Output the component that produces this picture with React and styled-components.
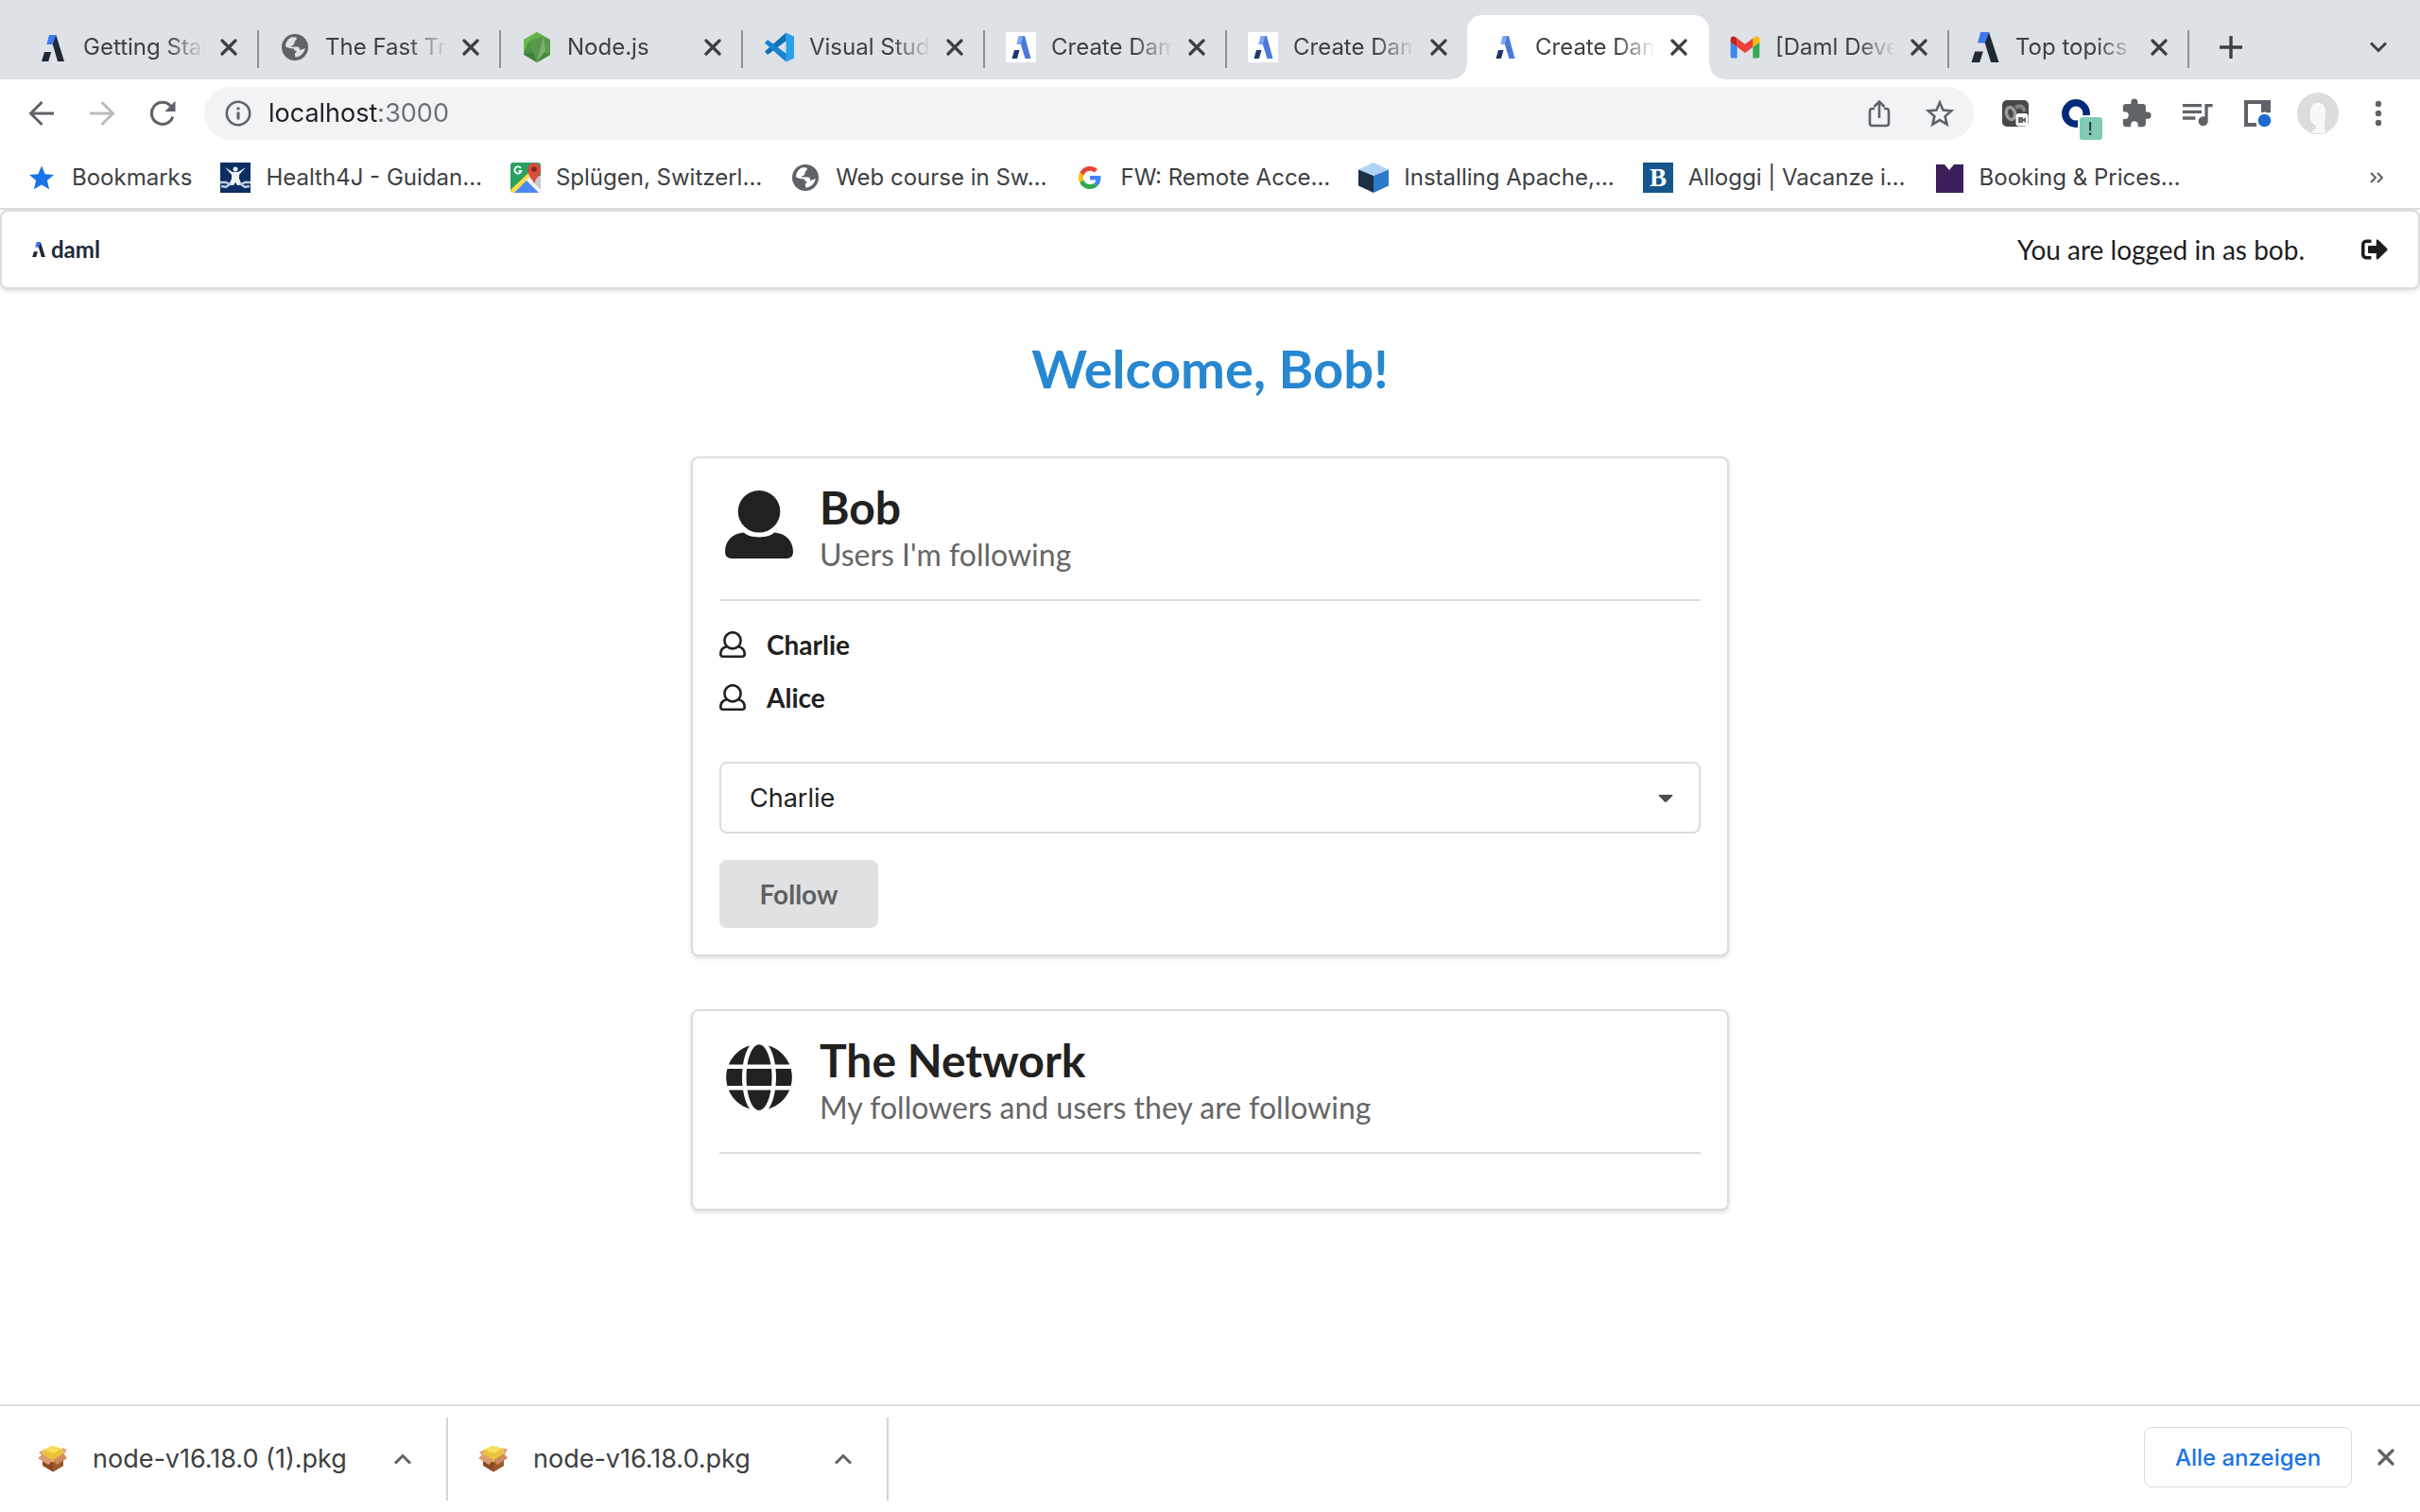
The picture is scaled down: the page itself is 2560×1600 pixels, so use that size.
import React, { useState } from 'react';
import styled, { createGlobalStyle, css } from 'styled-components';
import { FaGlobe, FaSignOutAlt } from 'react-icons/fa';
import { MdExtension, MdQueueMusic } from 'react-icons/md';

const uiFont = "Inter, Roboto, 'Liberation Sans', sans-serif";
const pageFont = "Lato, 'Liberation Sans', sans-serif";
const hairline = '#dcdcdd';

const GlobalStyle = createGlobalStyle`
  *, *::before, *::after { box-sizing: border-box; }
  body { margin: 0; background: #fff; font-family: ${uiFont}; color: #3c4043; }
  h1, h2, p, ul { margin: 0; padding: 0; }
  ul { list-style: none; }
  button, input, select { font-family: inherit; }
  svg { display: block; flex: none; }
`;

/* ---------- shell ---------- */

const Window = styled.div`
  display: flex;
  flex-direction: column;
  min-height: 100vh;
`;

const IconButton = styled.button`
  display: flex;
  align-items: center;
  justify-content: center;
  flex: none;
  width: ${(p) => p.$width || 40}px;
  height: 48px;
  padding: 0;
  border: 0;
  background: none;
  color: ${(p) => p.$color || '#5f6368'};
`;

/* The badge hangs past the lower right corner of the icon. */
const BadgedButton = styled(IconButton)`
  justify-content: flex-start;
  height: 56px;
`;

/* ---------- tab strip ---------- */

const TabStrip = styled.nav`
  display: flex;
  align-items: center;
  padding: 16px 24px 0 18px;
  background: #dee1e6;
`;

const Tab = styled.div`
  position: relative;
  display: flex;
  align-items: center;
  flex: 0 1 ${(p) => p.$width}px;
  min-width: 0;
  height: 68px;
  padding: 0 21px 0 22px;
  ${(p) =>
    p.$divided &&
    css`
      &::after {
        content: '';
        flex: none;
        width: 2px;
        height: 40px;
        margin: 4px -21px 0 21px;
        background: #8d9196;
      }
    `}
  ${(p) =>
    p.$active &&
    css`
      padding: 0 23px 0 24px;
      border-radius: 16px 16px 0 0;
      background: #fff;
      &::before,
      &::after {
        content: '';
        position: absolute;
        bottom: 0;
        width: 16px;
        height: 16px;
      }
      &::before {
        right: 100%;
        background: radial-gradient(circle at 0 0, transparent 15px, #fff 16px);
      }
      &::after {
        left: 100%;
        background: radial-gradient(circle at 100% 0, transparent 15px, #fff 16px);
      }
    `}
`;

const TabTitle = styled.a`
  flex: 1;
  min-width: 0;
  margin: 0 16px;
  overflow: hidden;
  font-size: 24px;
  line-height: 32px;
  white-space: nowrap;
  color: #3c4043;
  text-decoration: none;
  mask-image: linear-gradient(to right, #000 68%, transparent);
`;

const CloseTab = styled(IconButton)`
  width: 18px;
`;

const TabMenu = styled(IconButton)`
  margin-left: auto;
`;

const NewTab = styled(IconButton)`
  margin-left: 24px;
`;

/* ---------- toolbar ---------- */

const Toolbar = styled.div`
  display: flex;
  align-items: center;
  gap: 24px;
  padding: 8px 24px;
`;

const AddressBar = styled.form`
  display: flex;
  align-items: center;
  flex: 1;
  height: 56px;
  padding: 0 16px 0 20px;
  border-radius: 28px;
  background: #f1f3f4;
`;

/* The host is darker than the port that follows it. */
const AddressInput = styled.input`
  flex: 1;
  min-width: 0;
  margin-left: 16px;
  padding: 0;
  border: 0;
  outline: 0;
  font-size: 27px;
  line-height: 40px;
  color: transparent;
  background: linear-gradient(to right, #202124 118px, #6b6e72 118px);
  background-clip: text;
`;

const AddressActions = styled.div`
  display: flex;
  gap: 24px;
`;

/* ---------- bookmarks ---------- */

const BookmarkBar = styled.nav`
  display: flex;
  align-items: center;
  gap: 30px;
  height: 66px;
  padding: 0 26px 0 28px;
  border-bottom: 2px solid ${hairline};
`;

const Bookmark = styled.a`
  display: flex;
  align-items: center;
  gap: 16px;
  font-size: 24px;
  line-height: 32px;
  white-space: nowrap;
  color: #3c4043;
  text-decoration: none;
`;

const MoreBookmarks = styled(IconButton)`
  margin-left: auto;
`;

/* ---------- page ---------- */

const Page = styled.div`
  flex: 1;
  padding-bottom: 56px;
  font-family: ${pageFont};
  color: #212121;
`;

const raised = css`
  border: 2px solid ${hairline};
  border-radius: 8px;
  background: #fff;
  box-shadow: 0 2px 4px rgba(34, 36, 38, 0.15);
`;

const MenuBar = styled.header`
  ${raised}
  display: flex;
  align-items: center;
  height: 84px;
  padding: 0 32px;
`;

const Brand = styled.a`
  display: flex;
  align-items: center;
  gap: 6px;
  font-size: 24px;
  line-height: 24px;
  font-weight: 700;
  color: #1c2a3a;
  text-decoration: none;
`;

const LoginStatus = styled.p`
  margin-left: auto;
  margin-right: 60px;
  font-size: 28px;
  line-height: 36px;
  color: #1d1d1d;
`;

const Welcome = styled.h1`
  margin: 48px 0 57px;
  font-size: 56px;
  line-height: 72px;
  font-weight: 700;
  text-align: center;
  color: #2787d0;
`;

const Cards = styled.main`
  display: flex;
  flex-direction: column;
  gap: 56px;
  width: 100%;
  max-width: 1098px;
  margin: 0 auto;
`;

const Card = styled.section`
  ${raised}
  padding: 28px;
`;

const CardHeader = styled.div`
  display: flex;
  gap: 22px;
  padding-bottom: 27px;
  border-bottom: 2px solid ${hairline};
`;

const CardIcon = styled.div`
  display: flex;
  justify-content: center;
  width: 84px;
  padding-top: 6px;
`;

const CardTitle = styled.h2`
  font-size: 48px;
  line-height: 48px;
  font-weight: 700;
`;

const CardSubtitle = styled.p`
  margin-top: 6px;
  font-size: 32px;
  line-height: 40px;
  color: #666;
`;

const CardBody = styled.div`
  min-height: 30px;
`;

const People = styled.ul`
  padding-top: 18px;
`;

const Person = styled.li`
  display: flex;
  align-items: center;
  gap: 22px;
  height: 56px;
  font-size: 28px;
  font-weight: 700;
`;

const FollowForm = styled.form`
  display: flex;
  flex-direction: column;
  align-items: flex-start;
  gap: 28px;
  padding-top: 40px;
`;

const SelectField = styled.label`
  position: relative;
  display: block;
  width: 100%;
`;

const Select = styled.select`
  display: block;
  width: 100%;
  height: 76px;
  padding: 0 30px;
  border: 2px solid ${hairline};
  border-radius: 8px;
  appearance: none;
  outline: 0;
  background: #fff;
  font-family: ${uiFont};
  font-size: 27px;
  color: #212121;
`;

const Caret = styled.svg`
  position: absolute;
  top: 35px;
  right: 29px;
  pointer-events: none;
`;

const FollowButton = styled.button`
  width: 168px;
  height: 72px;
  padding: 0;
  border: 0;
  border-radius: 8px;
  background: #e0e1e2;
  font-size: 28px;
  font-weight: 700;
  color: #5f6061;
`;

/* ---------- download shelf ---------- */

const Shelf = styled.footer`
  display: flex;
  padding: 12px 22px 12px 8px;
  border-top: 2px solid ${hairline};
`;

const Download = styled.div`
  display: flex;
  align-items: center;
  width: 466px;
  height: 88px;
  padding: 0 26px 0 32px;
  border-right: 2px solid #d2d3d5;
`;

const DownloadLink = styled.a`
  flex: 1;
  margin-left: 26px;
  font-size: 27px;
  line-height: 36px;
  white-space: nowrap;
  color: #3c4043;
  text-decoration: none;
`;

const ShelfActions = styled.div`
  display: flex;
  align-items: center;
  gap: 22px;
  height: 64px;
  margin: 10px 0 0 auto;
`;

const ShowAll = styled.button`
  width: 220px;
  height: 64px;
  padding: 0;
  border: 1px solid #dadce0;
  border-radius: 8px;
  background: #fff;
  font-size: 24px;
  font-weight: 500;
  color: #1a73e8;
`;

/* ---------- icons ---------- */

const Line = ({ w, h, d, sw = 3, color = 'currentColor', ...rest }) => (
  <svg width={w} height={h} viewBox={`0 0 ${w} ${h}`} fill="none" stroke={color} strokeWidth={sw} {...rest}>
    <path d={d} />
  </svg>
);

const Cross = ({ color = '#3c4043' }) => (
  <Line w={18} h={18} d="M2 2L16 16M16 2L2 16" sw={3.2} color={color} strokeLinecap="round" />
);

const Fav = ({ children }) => (
  <svg width="32" height="32" viewBox="0 0 32 32">
    {children}
  </svg>
);

const DamlMark = () => (
  <g>
    <path d="M8 0h7.3l-2.6 10H5.4z" fill="#3c78f5" />
    <path d="M15.3 0L24 28h-7L11.800 10z" fill="#1f2a37" />
    <path d="M3 18h7.200L7.200 28H0z" fill="#1f2a37" />
  </g>
);

const DamlFav = () => (
  <Fav>
    <g transform="translate(4 3)">
      <DamlMark />
    </g>
  </Fav>
);

const DamlBigFav = () => (
  <Fav>
    <g transform="translate(1.500 0) scale(1.21 1.140)">
      <DamlMark />
    </g>
  </Fav>
);

const DamlAppFav = () => (
  <Fav>
    <rect width="32" height="32" fill="#fff" />
    <path d="M13.500 4h6l-2.200 9h-6z" fill="#7da7f7" />
    <path d="M18.500 4l1.500 0 6.500 24h-6L15.800 13z" fill="#4a78dc" />
    <path d="M9 19h5.500l-2.500 9H6.500z" fill="#20366f" />
  </Fav>
);

const WorldFav = ({ land = '#fff' }) => (
  <Fav>
    <circle cx="16" cy="16" r="14" fill="#5f6368" />
    <path
      d="M12.500 5.200l5 .3c.8 2-.3 3.200-1.600 3.700-.6 2-.2 3.800-1.800 4.600-1 .5-2 .2-2.200 1.800h7c1.800.2 2.200 1.500 2 3 1 .6 3.600-.3 5.800-1.800-.6 5.400-5.200 9.800-10.300 9.600l-.6-3.200c.4-1.500 2-1.400 1.800-3-1.800-.4-2.800-1.400-3-3-2.800 0-6.300-.2-8.500-2C6 10.800 8.500 7 12.500 5.200z"
      fill={land}
    />
  </Fav>
);

const WorldTabFav = () => <WorldFav land="#dee1e6" />;

const NodeFav = () => (
  <Fav>
    <path d="M16 0l14 8v16l-14 8-14-8V8z" fill="#589a4b" />
    <path d="M16 0L2 8v14L7 10z" fill="#6cbd45" />
    <path d="M7 10l16-6-7-4z" fill="#62b246" />
    <path d="M7 10L2 23l14 9z" fill="#4f9145" />
    <path d="M2 23l10-1 4 10z" fill="#3d7f3a" />
    <path d="M23 4L16 32l9-13z" fill="#7ab06d" />
    <path d="M30 24l-7-2-7 10z" fill="#3f873f" />
  </Fav>
);

const CodeFav = () => (
  <Fav>
    <path d="M23.500.500L1 20.500l3 3.500L24 9z" fill="#0f70b8" />
    <path d="M23.500 31.500L1 11.500 4 8l20 15z" fill="#1684cf" />
    <path d="M23.500.500L32 4.500v23l-8.500 4V.500z" fill="#29a0ec" />
  </Fav>
);

const MailFav = () => (
  <svg width="32" height="24" viewBox="50 42 92 66">
    <path fill="#4285f4" d="M58 108h14V74L52 59v43c0 3.320 2.690 6 6 6" />
    <path fill="#34a853" d="M120 108h14c3.320 0 6-2.690 6-6V59l-20 15" />
    <path fill="#fbbc04" d="M120 48v26l20-15v-8c0-7.420-8.470-11.650-14.400-7.200" />
    <path fill="#ea4335" d="M72 74V48l24 18 24-18v26L96 92" />
    <path fill="#c5221f" d="M52 51v8l20 15V48l-5.600-4.200c-5.940-4.450-14.400-.22-14.400 7.200" />
  </svg>
);

const StarFav = () => (
  <Fav>
    <path d="M16 3.500l3.700 8.700 9.300.8-7.100 6.100 2.200 9.200L16 23.400l-8.100 4.900 2.200-9.200L3 13l9.300-.8z" fill="#1a73e8" />
  </Fav>
);

const HealthFav = () => (
  <Fav>
    <rect width="32" height="32" fill="#0b2e63" />
    <circle cx="16" cy="7" r="2.500" fill="#e6ecf3" />
    <path d="M5 5l8 5h6l8-5-7 8v4l3 7h-5l-2-3-2 3H9l3-7v-4z" fill="#eef2f7" />
    <path d="M0 21h6l4 2-4 3-5-1M32 21h-6l-4 2 4 3 5-1" fill="none" stroke="#c3cfde" strokeWidth="2.400" />
  </Fav>
);

const MapFav = () => (
  <Fav>
    <rect width="32" height="32" rx="3" fill="#2ba160" />
    <path d="M32 14v18h-3L17 18l8-4z" fill="#c9c9c9" />
    <path d="M16 18l15 14H2z" fill="#4a89f3" />
    <path d="M0 29L19 11l3 3L4 32H1z" fill="#fddc4e" />
    <path d="M16.500 18.500l3-3L32 29v3h-2z" fill="#f3f3f3" />
    <path d="M25 23c-.6-6-7-9-7-15.500a7 7 0 0 1 14 0C32 14 25.600 17 25 23z" fill="#dc4b3e" />
    <circle cx="25" cy="7" r="2.800" fill="#7c2b24" />
    <path d="M11 6A3.600 3.600 0 1 0 11.500 8.800H8.500" fill="none" stroke="#fff" strokeWidth="1.800" />
  </Fav>
);

const GoogleFav = () => (
  <svg width="32" height="24" viewBox="-8 0 64 48">
    <path fill="#ea4335" d="M24 9.500c3.540 0 6.710 1.220 9.210 3.600l6.850-6.850C35.900 2.380 30.470 0 24 0 14.620 0 6.510 5.380 2.560 13.220l7.980 6.190C12.430 13.720 17.740 9.500 24 9.500z" />
    <path fill="#4285f4" d="M46.980 24.550c0-1.570-.15-3.090-.38-4.550H24v9.020h12.940c-.58 2.960-2.260 5.480-4.780 7.180l7.730 6c4.510-4.180 7.090-10.360 7.090-17.650z" />
    <path fill="#fbbc05" d="M10.530 28.590c-.48-1.450-.76-2.990-.76-4.590s.27-3.140.76-4.590l-7.980-6.190C.92 16.460 0 20.120 0 24c0 3.880.92 7.540 2.560 10.780l7.970-6.190z" />
    <path fill="#34a853" d="M24 48c6.480 0 11.930-2.130 15.890-5.810l-7.730-6c-2.150 1.450-4.920 2.300-8.160 2.300-6.260 0-11.570-4.220-13.470-9.910l-7.980 6.190C6.510 42.620 14.620 48 24 48z" />
  </svg>
);

const CubeFav = () => (
  <Fav>
    <path d="M16 0l16 7.500L16 14 0 7.500z" fill="#aed3f5" />
    <path d="M0 7.500L16 14v18L0 24.500z" fill="#1b2f45" />
    <path d="M32 7.500L16 14v18l16-7.500z" fill="#2e79c9" />
  </Fav>
);

const LodgingFav = () => (
  <Fav>
    <rect width="32" height="32" fill="#15578c" />
    <text x="16" y="25" textAnchor="middle" fontFamily="Liberation Serif, serif" fontWeight="700" fontSize="27" fill="#fff">
      B
    </text>
  </Fav>
);

const BookingFav = () => (
  <Fav>
    <path d="M2 2h9l5 6 5-6h10v30H2z" fill="#3b1f5b" />
  </Fav>
);

const CameraExtension = () => (
  <svg width="28" height="28" viewBox="0 0 28 28">
    <rect width="28" height="28" rx="5" fill="#484848" />
    <ellipse cx="9" cy="14" rx="4.500" ry="6.500" fill="none" stroke="#9b9b9b" strokeWidth="3.500" transform="rotate(-15 9 14)" />
    <path d="M14 8c3-2 6-2 8 0l2 4" fill="none" stroke="#808080" strokeWidth="4" />
    <rect x="14.500" y="14" width="13" height="13.500" rx="3" fill="#fff" />
    <path d="M17 18h5v2l3-2v6l-3-2v2h-5z" fill="#666" />
  </svg>
);

const AlertExtension = () => (
  <svg width="48" height="56" viewBox="0 0 48 56">
    <circle cx="20" cy="28" r="11.200" fill="none" stroke="#03297a" strokeWidth="7.500" />
    <rect x="22" y="30" width="26" height="26" rx="4" fill="#fff" />
    <rect x="24" y="32" width="24" height="24" rx="3" fill="#7fcbb5" />
    <text x="35" y="51" textAnchor="middle" fontFamily={uiFont} fontSize="18" fill="#202124">
      !
    </text>
  </svg>
);

const ReaderIcon = () => (
  <svg width="30" height="30" viewBox="0 0 30 30">
    <path d="M1 1h28v28H1zM5 5v20h14V5z" fill="#5f6368" fillRule="evenodd" />
    <circle cx="22.500" cy="22.500" r="9" fill="#fff" />
    <path d="M14 25h5v5h-5zM27 14h3v3h-3z" fill="#fff" />
    <circle cx="22.500" cy="22.500" r="6.800" fill="#1f69d2" />
  </svg>
);

const Avatar = () => (
  <svg width="44" height="44" viewBox="0 0 44 44">
    <circle cx="22" cy="22" r="22" fill="#dcdcdc" />
    <path d="M13 42c4-2 7-4 6-7-5-2-6-7-6-12 0-9 4-13 9-13 6 0 9 5 9 12 0 8-3 13 0 20-5 2.500-12 2.500-18 0z" fill="#f6f8fa" stroke="#c5d0d8" strokeWidth="0.8" />
  </svg>
);

const PersonSolid = () => (
  <svg width="72" height="72" viewBox="0 0 72 72" fill="#212121">
    <circle cx="36" cy="22.300" r="22.300" />
    <path d="M20 44.500C26 51 46 51 52 44.500 65 45.500 72 54 72 65q0 7-7 7H7q-7 0-7-7c0-11 7-19.500 20-20.500z" />
  </svg>
);

const PersonOutline = () => (
  <svg width="28" height="28" viewBox="0 0 28 28" fill="none" stroke="#212121" strokeWidth="2.600">
    <circle cx="14" cy="9.800" r="8.600" />
    <path d="M8 16.200C3.800 17 1.300 20 1.300 24.200q0 2.500 2.600 2.500h20.200q2.600 0 2.600-2.500C26.700 20 24.200 17 20 16.200" />
  </svg>
);

const PackageIcon = () => (
  <svg width="32" height="32" viewBox="0 0 32 32">
    <path d="M5 14l11 5 11-5v9l-11 6.500L5 23z" fill="#8a4b20" />
    <path d="M16 19l11-5v9l-11 6.500z" fill="#9c5a2a" />
    <path d="M6 6l9-4 11 3 1 8-11 6L5 14z" fill="#e9c437" />
    <path d="M6 6l9-4 11 3-9 5z" fill="#f9dc5c" />
    <path d="M5 11l11 6-5 5L0 15z" fill="#dc9c72" />
    <path d="M27 10l-11 7 4 5 11-7z" fill="#cf8b5f" />
    <path d="M26 4l5 2-4 6zM6 6L1 9l4 4z" fill="#e0a27a" />
  </svg>
);

const Chevron = ({ up }) => (
  <Line w={20} h={12} sw={3} color={up ? '#5f6368' : '#3c4043'} d={up ? 'M2 10.500L10 2.500L18 10.500' : 'M2 1.500L10 9.500L18 1.500'} />
);

/* ---------- data ---------- */

const tabs = [
  { title: 'Getting Started', Icon: DamlFav, width: 256, divided: true },
  { title: 'The Fast Track', Icon: WorldTabFav, width: 256, divided: true },
  { title: 'Node.js', Icon: NodeFav, width: 256, divided: true },
  { title: 'Visual Studio', Icon: CodeFav, width: 256, divided: true },
  { title: 'Create Daml', Icon: DamlAppFav, width: 256, divided: true },
  { title: 'Create Daml', Icon: DamlAppFav, width: 254 },
  { title: 'Create Daml', Icon: DamlAppFav, width: 256, active: true },
  { title: '[Daml Developers', Icon: MailFav, width: 254, divided: true },
  { title: 'Top topics', Icon: DamlBigFav, width: 254, divided: true },
];

const bookmarks = [
  ['Bookmarks', StarFav],
  ['Health4J - Guidan…', HealthFav],
  ['Splügen, Switzerl…', MapFav],
  ['Web course in Sw…', WorldFav],
  ['FW: Remote Acce…', GoogleFav],
  ['Installing Apache,…', CubeFav],
  ['Alloggi | Vacanze i…', LodgingFav],
  ['Booking & Prices…', BookingFav],
];

const following = ['Charlie', 'Alice'];
const downloads = ['node-v16.18.0 (1).pkg', 'node-v16.18.0.pkg'];

/* ---------- components ---------- */

function InfoCard({ icon, title, subtitle, children }) {
  return (
    <Card>
      <CardHeader>
        <CardIcon>{icon}</CardIcon>
        <div>
          <CardTitle>{title}</CardTitle>
          <CardSubtitle>{subtitle}</CardSubtitle>
        </div>
      </CardHeader>
      <CardBody>{children}</CardBody>
    </Card>
  );
}

export default function App() {
  const [address, setAddress] = useState('localhost:3000');
  const [selected, setSelected] = useState('Charlie');
  const stay = (e) => e.preventDefault();

  return (
    <Window>
      <GlobalStyle />
      <TabStrip aria-label="Tabs">
        {tabs.map(({ title, Icon, width, divided, active }, i) => (
          <Tab key={i} $width={width} $divided={divided} $active={active}>
            <Icon />
            <TabTitle href="#">{title}</TabTitle>
            <CloseTab aria-label="Close tab">
              <Cross />
            </CloseTab>
          </Tab>
        ))}
        <NewTab aria-label="New tab">
          <Line w={24} h={24} sw={3.4} color="#3c4043" d="M12 1V23M1 12H23" strokeLinecap="round" />
        </NewTab>
        <TabMenu aria-label="Search tabs">
          <Chevron />
        </TabMenu>
      </TabStrip>

      <Toolbar>
        <IconButton aria-label="Back">
          <Line w={28} h={28} d="M27 14H3M14.500 2L2.500 14L14.500 26" />
        </IconButton>
        <IconButton aria-label="Forward" $color="#babcbe">
          <Line w={28} h={28} d="M1 14H25M13.500 2L25.500 14L13.500 26" />
        </IconButton>
        <IconButton aria-label="Reload">
          <svg width="28" height="28" viewBox="0 0 28 28">
            <path d="M24.800 17.500A11.500 11.500 0 1 1 22.500 6.200" fill="none" stroke="currentColor" strokeWidth="3" />
            <path d="M27.500.800V12H16.300z" fill="currentColor" />
          </svg>
        </IconButton>
        <AddressBar onSubmit={stay}>
          <svg width="32" height="32" viewBox="0 0 32 32" fill="none" stroke="#5f6368" strokeWidth="2.600">
            <circle cx="16" cy="16" r="12.200" />
            <path d="M16 14.500V22.500M16 9.500V12.300" strokeWidth="3" />
          </svg>
          <AddressInput aria-label="Address" value={address} onChange={(e) => setAddress(e.target.value)} />
          <AddressActions>
            <IconButton type="button" aria-label="Share">
              <Line w={24} h={30} sw={2.6} d="M7 10H4.500Q2 10 2 12.500V25.500Q2 28 4.500 28H19.500Q22 28 22 25.500V12.500Q22 10 19.500 10H17M12 20V2.500M6.500 8L12 2.500L17.500 8" />
            </IconButton>
            <IconButton type="button" aria-label="Bookmark this page">
              <Line w={32} h={30} sw={2.6} d="M16 3.500L19.500 11.500L28.200 12.300L21.600 18.100L23.600 26.600L16 22.100L8.400 26.600L10.400 18.100L3.800 12.300L12.500 11.500Z" />
            </IconButton>
          </AddressActions>
        </AddressBar>
        <IconButton aria-label="Camera extension">
          <CameraExtension />
        </IconButton>
        <BadgedButton aria-label="Alert extension">
          <AlertExtension />
        </BadgedButton>
        <IconButton aria-label="Extensions">
          <MdExtension size={34} />
        </IconButton>
        <IconButton aria-label="Media">
          <MdQueueMusic size={40} />
        </IconButton>
        <IconButton aria-label="Side panel">
          <ReaderIcon />
        </IconButton>
        <IconButton aria-label="Profile">
          <Avatar />
        </IconButton>
        <IconButton aria-label="Browser menu">
          <svg width="8" height="28" viewBox="0 0 8 28" fill="currentColor">
            <circle cx="4" cy="4" r="3.200" />
            <circle cx="4" cy="14" r="3.200" />
            <circle cx="4" cy="24" r="3.200" />
          </svg>
        </IconButton>
      </Toolbar>

      <BookmarkBar aria-label="Bookmarks">
        {bookmarks.map(([label, Icon]) => (
          <Bookmark key={label} href="#">
            <Icon />
            {label}
          </Bookmark>
        ))}
        <MoreBookmarks aria-label="More bookmarks">
          <Line w={14} h={12} sw={2} d="M1 1L6 6L1 11M8 1L13 6L8 11" />
        </MoreBookmarks>
      </BookmarkBar>

      <Page>
        <MenuBar>
          <Brand href="#">
            <svg width="14" height="16" viewBox="0 0 24 28">
              <DamlMark />
            </svg>
            daml
          </Brand>
          <LoginStatus>You are logged in as bob.</LoginStatus>
          <IconButton aria-label="Log out" $width={28} $color="#1d1d1d">
            <FaSignOutAlt size={28} />
          </IconButton>
        </MenuBar>

        <Welcome>Welcome, Bob!</Welcome>

        <Cards>
          <InfoCard icon={<PersonSolid />} title="Bob" subtitle="Users I'm following">
            <People>
              {following.map((name) => (
                <Person key={name}>
                  <PersonOutline />
                  {name}
                </Person>
              ))}
            </People>
            <FollowForm onSubmit={stay}>
              <SelectField>
                <Select aria-label="User to follow" value={selected} onChange={(e) => setSelected(e.target.value)}>
                  {following.map((name) => (
                    <option key={name}>{name}</option>
                  ))}
                </Select>
                <Caret width="16" height="8" viewBox="0 0 16 8" fill="#4d4d4d">
                  <path d="M1 0H15Q16 .5 15 1.500L9 7.500Q8 8.300 7 7.500L1 1.500Q0 .5 1 0Z" />
                </Caret>
              </SelectField>
              <FollowButton>Follow</FollowButton>
            </FollowForm>
          </InfoCard>
          <InfoCard icon={<FaGlobe size={72} />} title="The Network" subtitle="My followers and users they are following" />
        </Cards>
      </Page>

      <Shelf>
        {downloads.map((name) => (
          <Download key={name}>
            <PackageIcon />
            <DownloadLink href="#">{name}</DownloadLink>
            <IconButton aria-label={`Options for ${name}`}>
              <Chevron up />
            </IconButton>
          </Download>
        ))}
        <ShelfActions>
          <ShowAll>Alle anzeigen</ShowAll>
          <IconButton aria-label="Close downloads" $width={28}>
            <Cross color="#5f6368" />
          </IconButton>
        </ShelfActions>
      </Shelf>
    </Window>
  );
}
